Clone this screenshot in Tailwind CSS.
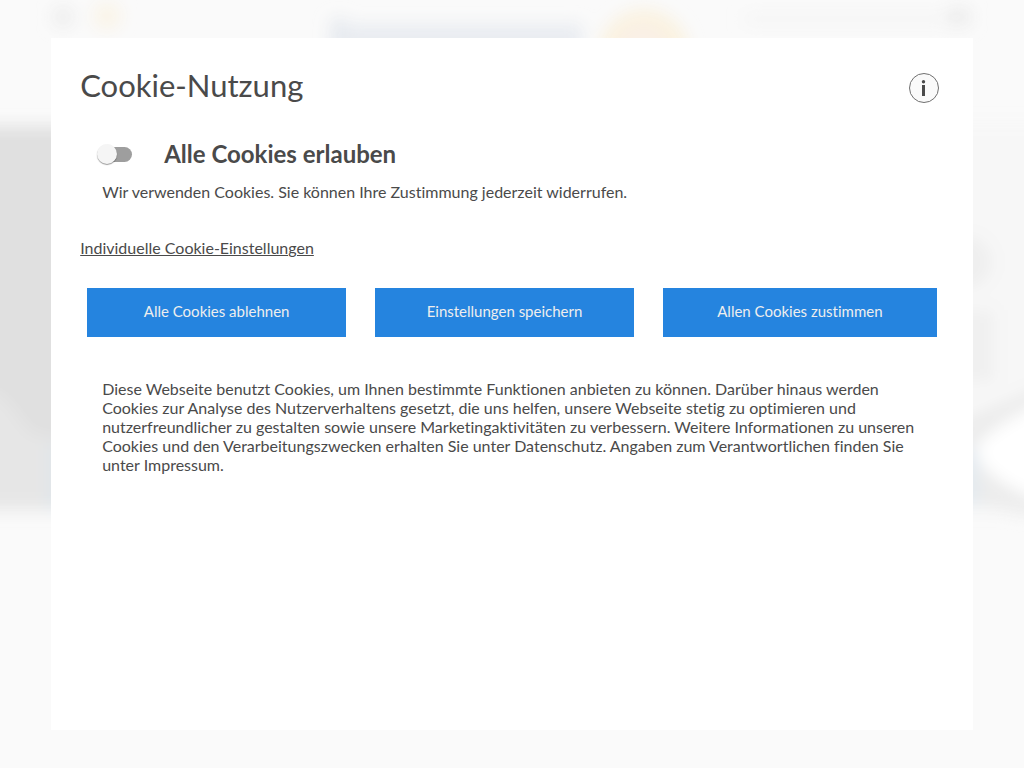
<!DOCTYPE html>
<html lang="de">
  <head>
    <meta charset="UTF-8" />
    <meta name="viewport" content="width=device-width, initial-scale=1.0" />
    <title>Cookie-Nutzung</title>
    <script src="https://cdn.jsdelivr.net/npm/@tailwindcss/browser@4"></script>
  </head>
  <body class="h-screen overflow-hidden bg-[#fafafa] font-['Lato','Liberation_Sans',sans-serif] text-[#4a4a4a] [font-variant-ligatures:none]">
    <!-- Faded page behind the dialog -->
    <svg
      class="fixed inset-0 h-full w-full"
      viewBox="0 0 1024 768"
      preserveAspectRatio="none"
      aria-hidden="true"
    >
      <defs>
        <filter id="soft" x="-50%" y="-50%" width="200%" height="200%">
          <feGaussianBlur stdDeviation="8" />
        </filter>
      </defs>
      <g filter="url(#soft)">
        <rect x="54" y="8" width="18" height="18" fill="#ececec" />
        <circle cx="107" cy="16" r="14" fill="#faf4e8" />
        <rect x="330" y="24" width="252" height="40" fill="#e9ecf1" />
        <rect x="332" y="18" width="14" height="30" fill="#e6eaef" />
        <circle cx="644" cy="54" r="45" fill="#faf2e0" />
        <circle cx="642" cy="48" r="24" fill="#faf0e6" />
        <rect x="744" y="14" width="215" height="10" fill="#f5f5f5" />
        <rect x="948" y="8" width="22" height="18" fill="#ececec" />
        <rect x="-40" y="126" width="500" height="384" fill="#e0e0e0" />
        <path d="M-40 380 L0 396 L14 412 L30 434 L90 446 V510 H-40 Z" fill="#e6e6e6" />
        <rect x="48" y="444" width="20" height="66" fill="#dfe5ea" />
        <rect x="460" y="124" width="610" height="386" fill="#f7f7f7" />
        <circle cx="966" cy="262" r="26" fill="#efefef" />
        <rect x="940" y="310" width="54" height="72" fill="#f0f0f0" />
        <path d="M940 430 L1060 378 V520 L1024 514 L980 506 H940 Z" fill="#ececec" />
        <path d="M972 452 Q990 424 1064 392 V506 Q1000 494 972 452 Z" fill="#ffffff" />
        <rect x="950" y="450" width="28" height="56" fill="#e3eaf0" />
      </g>
    </svg>

    <main
      role="dialog"
      aria-labelledby="title"
      class="fixed inset-[5%] overflow-auto bg-white px-[29px] pt-[27px]"
    >
      <header class="flex items-start justify-between pr-[5px]">
        <h1 id="title" class="text-[31px] leading-10">Cookie-Nutzung</h1>
        <button
          type="button"
          aria-label="Informationen"
          class="mt-2 flex size-[30px] items-center justify-center rounded-full border border-[#707070] bg-[#fafafa]"
        >
          <svg class="size-4" viewBox="0 0 16 16" fill="#4a4a4a" aria-hidden="true">
            <circle cx="7.5" cy="1.7" r="1.7" />
            <rect x="6" y="5" width="3" height="11" />
          </svg>
        </button>
      </header>

      <form>
        <div class="mt-[33px] flex items-center gap-8 pl-[18px]">
          <input
            id="all-cookies"
            type="checkbox"
            class="relative h-[15px] w-[34px] appearance-none rounded-full bg-[#9e9e9e] before:absolute before:-top-[3px] before:-left-px before:size-5 before:rounded-full before:bg-[#f5f5f5] before:shadow-[0_1px_1px_#00000066] checked:bg-[#93c1ee] checked:before:left-4"
          />
          <label for="all-cookies" class="text-2xl font-bold">Alle Cookies erlauben</label>
        </div>
        <p class="mt-[10px] pl-[22px] text-base">
          Wir verwenden Cookies. Sie können Ihre Zustimmung jederzeit widerrufen.
        </p>

        <a href="#" class="mt-8 inline-block text-base underline">Individuelle Cookie-Einstellungen</a>

        <div class="mt-7 grid grid-cols-3 text-[15px] text-[#eeeeee]">
          <div class="pr-[22px] pl-[7px]">
            <button type="button" class="h-[49px] w-full bg-[#2584df] pb-1">Alle Cookies ablehnen</button>
          </div>
          <div class="pr-[22px] pl-[7px]">
            <button type="submit" class="h-[49px] w-full bg-[#2584df] pb-1">Einstellungen speichern</button>
          </div>
          <div class="px-[7px]">
            <button type="button" class="h-[49px] w-full bg-[#2584df] pb-1">Allen Cookies zustimmen</button>
          </div>
        </div>
      </form>

      <p class="mt-[42px] px-[22px] text-base leading-[19px]">
        Diese Webseite benutzt Cookies, um Ihnen bestimmte Funktionen anbieten zu können. Darüber hinaus werden
        Cookies zur Analyse des Nutzerverhaltens gesetzt, die uns helfen, unsere Webseite stetig zu optimieren und
        nutzerfreundlicher zu gestalten sowie unsere Marketingaktivitäten zu verbessern. Weitere Informationen zu unseren
        Cookies und den Verarbeitungszwecken erhalten Sie unter Datenschutz. Angaben zum Verantwortlichen finden Sie
        unter Impressum.
      </p>
    </main>
  </body>
</html>
